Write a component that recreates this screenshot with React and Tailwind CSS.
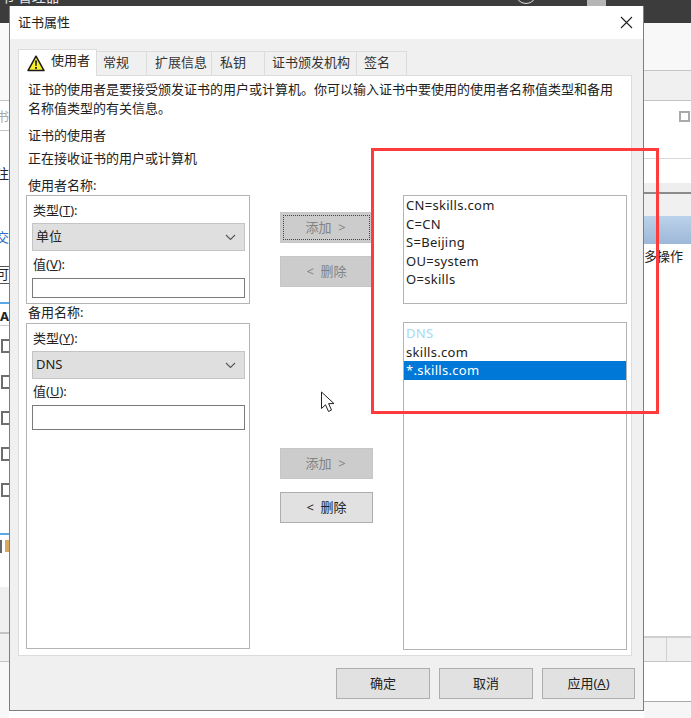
const font = { fontFamily: '"Noto Sans", "Noto Sans CJK SC", sans-serif' };

const Box = ({ className = "" }) => (
  <div className={`w-[13px] h-[14px] shrink-0 border-2 border-[#6e6e6e] bg-white ${className}`} />
);

const LeftStrip = () => (
  <div className="w-[9px] h-full flex flex-col overflow-hidden text-[13px] leading-[18px] text-[#222]">
    <div className="h-[78px] shrink-0 bg-[#f9f9f9] border-b border-[#c4c4c4]" />
    <div className="h-[30px] shrink-0 bg-white border-b border-[#c4c4c4] flex justify-end items-center text-[#aaa]">
      <span className="shrink-0">书</span>
    </div>
    <div className="flex-1 bg-white flex flex-col">
      <div className="mt-[33px] h-[18px] flex justify-end"><span className="shrink-0">注</span></div>
      <div className="mt-[46px] h-[18px] flex justify-end text-[#2b6fc4]"><span className="shrink-0">交</span></div>
      <div className="mt-[20px] h-[18px] flex justify-end border-t border-b border-[#555] leading-[14px]"><span className="shrink-0">可</span></div>
      <div className="mt-[18px] h-[2px] bg-[#5aa9e6]" />
      <div className="h-[22px] border-b border-[#ccc] font-bold whitespace-nowrap leading-[24px]">Ac</div>
      <Box className="mt-[13px] ml-px" />
      <Box className="mt-[22px] ml-px" />
      <Box className="mt-[22px] ml-px" />
      <Box className="mt-[22px] ml-px" />
      <Box className="mt-[22px] ml-px" />
      <div className="mt-[36px] h-[2px] bg-[#5aa9e6]" />
      <div className="mt-[4px] flex gap-[3px] items-center h-[14px]">
        <div className="w-[2px] h-[13px] border border-[#666]" />
        <div className="w-[4px] h-[12px] bg-[#d9a860]" />
      </div>
      <div className="mt-[34px] h-[45px] bg-[#f0f0f0]" />
      <div className="h-[2px] bg-[#c4c4c4]" />
      <div className="h-[28px] bg-[#f0f0f0] border-b border-[#c4c4c4]" />
      <div className="flex-1 bg-[#f8f8f8]" />
    </div>
  </div>
);

const RightStrip = () => (
  <div className="w-[47px] h-full flex flex-col overflow-hidden text-[13px] text-[#222]">
    <div className="h-[48px] bg-[#f8f8f8] border-b border-[#c4c4c4]" />
    <div className="h-[30px] bg-[#f0f0f0] border-b border-[#c4c4c4]" />
    <div className="h-[58px] bg-white border-b border-[#d8d8d8] flex justify-end pt-[10px]">
      <div className="w-[11px] h-[11px] border-2 border-[#aaa] mr-[1px]" />
    </div>
    <div className="h-[24px] bg-white" />
    <div className="h-[9px] bg-[#eeeeee]" />
    <div className="h-[2px] bg-[#8a8a8a]" />
    <div className="h-[22px] bg-[#f0f0f0]" />
    <div className="h-[28px] bg-gradient-to-b from-[#bcd2ea] to-[#9db8d8]" />
    <div className="h-[392px] bg-white pt-[3px] leading-[18px] whitespace-nowrap">多操作</div>
    <div className="h-[2px] bg-[#d0d0d0]" />
    <div className="h-[24px] bg-[#f0f0f0] border-b border-[#c4c4c4] pl-[22px]">
      <div className="w-px h-full bg-[#cfcfcf]" />
    </div>
    <div className="h-[40px] bg-white border-b border-[#aaa]" />
    <div className="flex-1 bg-[#f6f6f6]" />
  </div>
);

const Tab = ({ children, className }) => (
  <div className={`${className} h-[24px] border-t border-r border-[#dcdcdc] bg-[#f0f0f0] text-[13px] leading-[21px] text-[#333] whitespace-nowrap`}>
    {children}
  </div>
);

const Warn = () => (
  <svg width="18" height="17" viewBox="0 0 18 17" className="shrink-0">
    <path d="M9 1.2 L17 15.6 H1 Z" fill="#f7ee2e" stroke="#1a1a1a" strokeWidth="1.5" strokeLinejoin="round" />
    <path d="M8.1 5.5 H9.9 L9.6 11 H8.4 Z" fill="#111" />
    <rect x="8.1" y="12" width="1.8" height="1.8" fill="#111" />
  </svg>
);

const Select = ({ value, className = "" }) => (
  <div className={`h-[28px] bg-[#dfdfdf] border border-[#c4c4c4] flex items-center justify-between pl-[3px] pr-[8px] text-[13px] ${className}`}>
    <span>{value}</span>
    <svg width="11" height="7" viewBox="0 0 11 7" fill="none" stroke="#555" strokeWidth="1.1">
      <path d="M1 1 L5.5 5.5 L10 1" />
    </svg>
  </div>
);

const Input = ({ className = "" }) => (
  <div className={`bg-white border border-[#7a7a7a] ${className}`} />
);

const Btn = ({ children, disabled, focused, className = "" }) => (
  <div
    className={`relative flex items-center justify-center h-[31px] text-[13px] whitespace-pre border ${
      disabled ? "bg-[#cccccc] border-[#c6c6c6] text-[#838383]" : "bg-[#e1e1e1] border-[#adadad] text-[#222]"
    } ${className}`}
  >
    {focused && <div className="absolute inset-[2px] border border-dotted border-[#444]" />}
    {children}
  </div>
);

const Mn = ({ children }) => <span className="underline">{children}</span>;

const App = () => {
  return (
    <div className="relative w-[691px] h-[718px] overflow-hidden bg-white text-[#222]" style={font}>
      {/* window behind the dialog */}
      <div className="h-full flex flex-col">
        <div className="h-[23px] shrink-0 bg-[#3c3c3c] overflow-hidden relative">
          <div className="text-[14px] leading-[18px] -mt-[12px] text-[#e8e8e8] whitespace-nowrap">书·管理器</div>
          <div className="absolute left-[515px] -top-[18px] w-[22px] h-[22px] rounded-full border border-[#ddd]" />
          <div className="absolute left-[587px] top-0 w-[19px] h-[6px] bg-[#b5b5b5]" />
        </div>
        <div className="flex-1 flex justify-between min-h-0">
          <LeftStrip />
          <RightStrip />
        </div>
      </div>

      {/* dialog */}
      <div className="absolute left-[9px] top-[6px] w-[635px] h-[705px] flex flex-col bg-[#f0f0f0] border-l border-r border-b border-[#7e7e7e]">
        <div className="h-[33px] shrink-0 bg-white flex items-center justify-between pl-[8px] pr-[10px] text-[13px]">
          <span>证书属性</span>
          <svg width="13" height="13" viewBox="0 0 13 13" stroke="#222" strokeWidth="1.1">
            <path d="M1 1 L12 12 M12 1 L1 12" />
          </svg>
        </div>

        <div className="pl-[8px] pr-[11px] pt-[10px] flex-1 flex flex-col">
          <div className="flex items-end h-[26px] shrink-0 relative z-10">
            <div className="w-[79px] h-[27px] -mb-px bg-white border-t border-l border-r border-[#dcdcdc] flex items-center gap-[6px] pl-[8px] text-[13px]">
              <Warn />
              <span className="-mt-[5px] whitespace-nowrap">使用者</span>
            </div>
            <Tab className="w-[50px] pl-[6px]">常规</Tab>
            <Tab className="w-[65px] pl-[8px]">扩展信息</Tab>
            <Tab className="w-[53px] pl-[8px]">私钥</Tab>
            <Tab className="w-[92px] pl-[7px]">证书颁发机构</Tab>
            <Tab className="w-[50px] pl-[7px]">签名</Tab>
          </div>

          <div className="h-[581px] shrink-0 bg-white border border-[#dcdcdc] pl-[7px] pr-[5px] text-[13px]">
            <div className="pl-[2px] pt-[4px] leading-[19px]">
              <p>证书的使用者是要接受颁发证书的用户或计算机。你可以输入证书中要使用的使用者名称值类型和备用</p>
              <p>名称值类型的有关信息。</p>
              <p className="mt-[8px]">证书的使用者</p>
              <p className="mt-[4px]">正在接收证书的用户或计算机</p>
            </div>

            <div className="flex mt-[9px]">
              <div className="w-[224px] shrink-0">
                <div className="h-[18px] pl-[2px] leading-[16px]">使用者名称:</div>
                <div className="h-[109px] border border-[#b4b4b4] pl-[5px] pr-[4px] pt-[5px]">
                  <div className="leading-[18px] pl-px">类型(<Mn>T</Mn>):</div>
                  <Select value="单位" className="mt-[4px]" />
                  <div className="mt-[4px] leading-[18px] pl-px">值(<Mn>V</Mn>):</div>
                  <Input className="h-[20px] mt-[5px]" />
                </div>
                <div className="h-[19px] pl-[2px] leading-[17px]">备用名称:</div>
                <div className="h-[326px] border border-[#b4b4b4] pl-[5px] pr-[4px] pt-[5px]">
                  <div className="leading-[18px] pl-px">类型(<Mn>Y</Mn>):</div>
                  <Select value="DNS" className="mt-[4px]" />
                  <div className="mt-[3px] leading-[18px] pl-px">值(<Mn>U</Mn>):</div>
                  <Input className="h-[25px] mt-[5px]" />
                </div>
              </div>

              <div className="w-[93px] shrink-0 ml-[30px] pt-[35px]">
                <Btn disabled focused className="pr-[2px]">添加  &gt;</Btn>
                <Btn disabled className="mt-[13px]">&lt;  删除</Btn>
                <Btn disabled className="mt-[161px] pr-[2px]">添加  &gt;</Btn>
                <Btn className="mt-[13px]">&lt;  删除</Btn>
              </div>

              <div className="w-[224px] shrink-0 ml-[30px] pt-[18px] leading-[18.5px] tracking-[0.3px]">
                <div className="h-[109px] border border-[#b4b4b4]">
                  {["CN=skills.com", "C=CN", "S=Beijing", "OU=system", "O=skills"].map((t) => (
                    <div key={t} className="pl-[2px]">{t}</div>
                  ))}
                </div>
                <div className="h-[328px] mt-[18px] border border-[#b4b4b4] pt-px">
                  <div className="pl-[2px] text-[#a6d8f2]">DNS</div>
                  <div className="pl-[2px]">skills.com</div>
                  <div className="pl-[2px] bg-[#0078d7] text-white">*.skills.com</div>
                </div>
              </div>
            </div>
          </div>

          <div className="flex justify-end gap-[9px] mt-[12px] -mr-[3px] text-[13px]">
            <Btn className="w-[94px]">确定</Btn>
            <Btn className="w-[94px]">取消</Btn>
            <Btn className="w-[93px]">应用(<Mn>A</Mn>)</Btn>
          </div>
        </div>
      </div>

      {/* annotation + cursor on top of everything */}
      <div className="absolute left-[371px] top-[148px] w-[288px] h-[266px] border-[3px] border-[#ff3b3b]" />
      <svg className="absolute left-[320px] top-[391px]" width="16" height="23" viewBox="0 0 16 23">
        <path d="M1.5 1 V17.5 L5.5 13.8 L8.5 20.5 L11.5 19 L8.6 12.6 H14 Z" fill="#fff" stroke="#222" strokeWidth="1" strokeLinejoin="round" />
      </svg>
    </div>
  );
};

export default App;
